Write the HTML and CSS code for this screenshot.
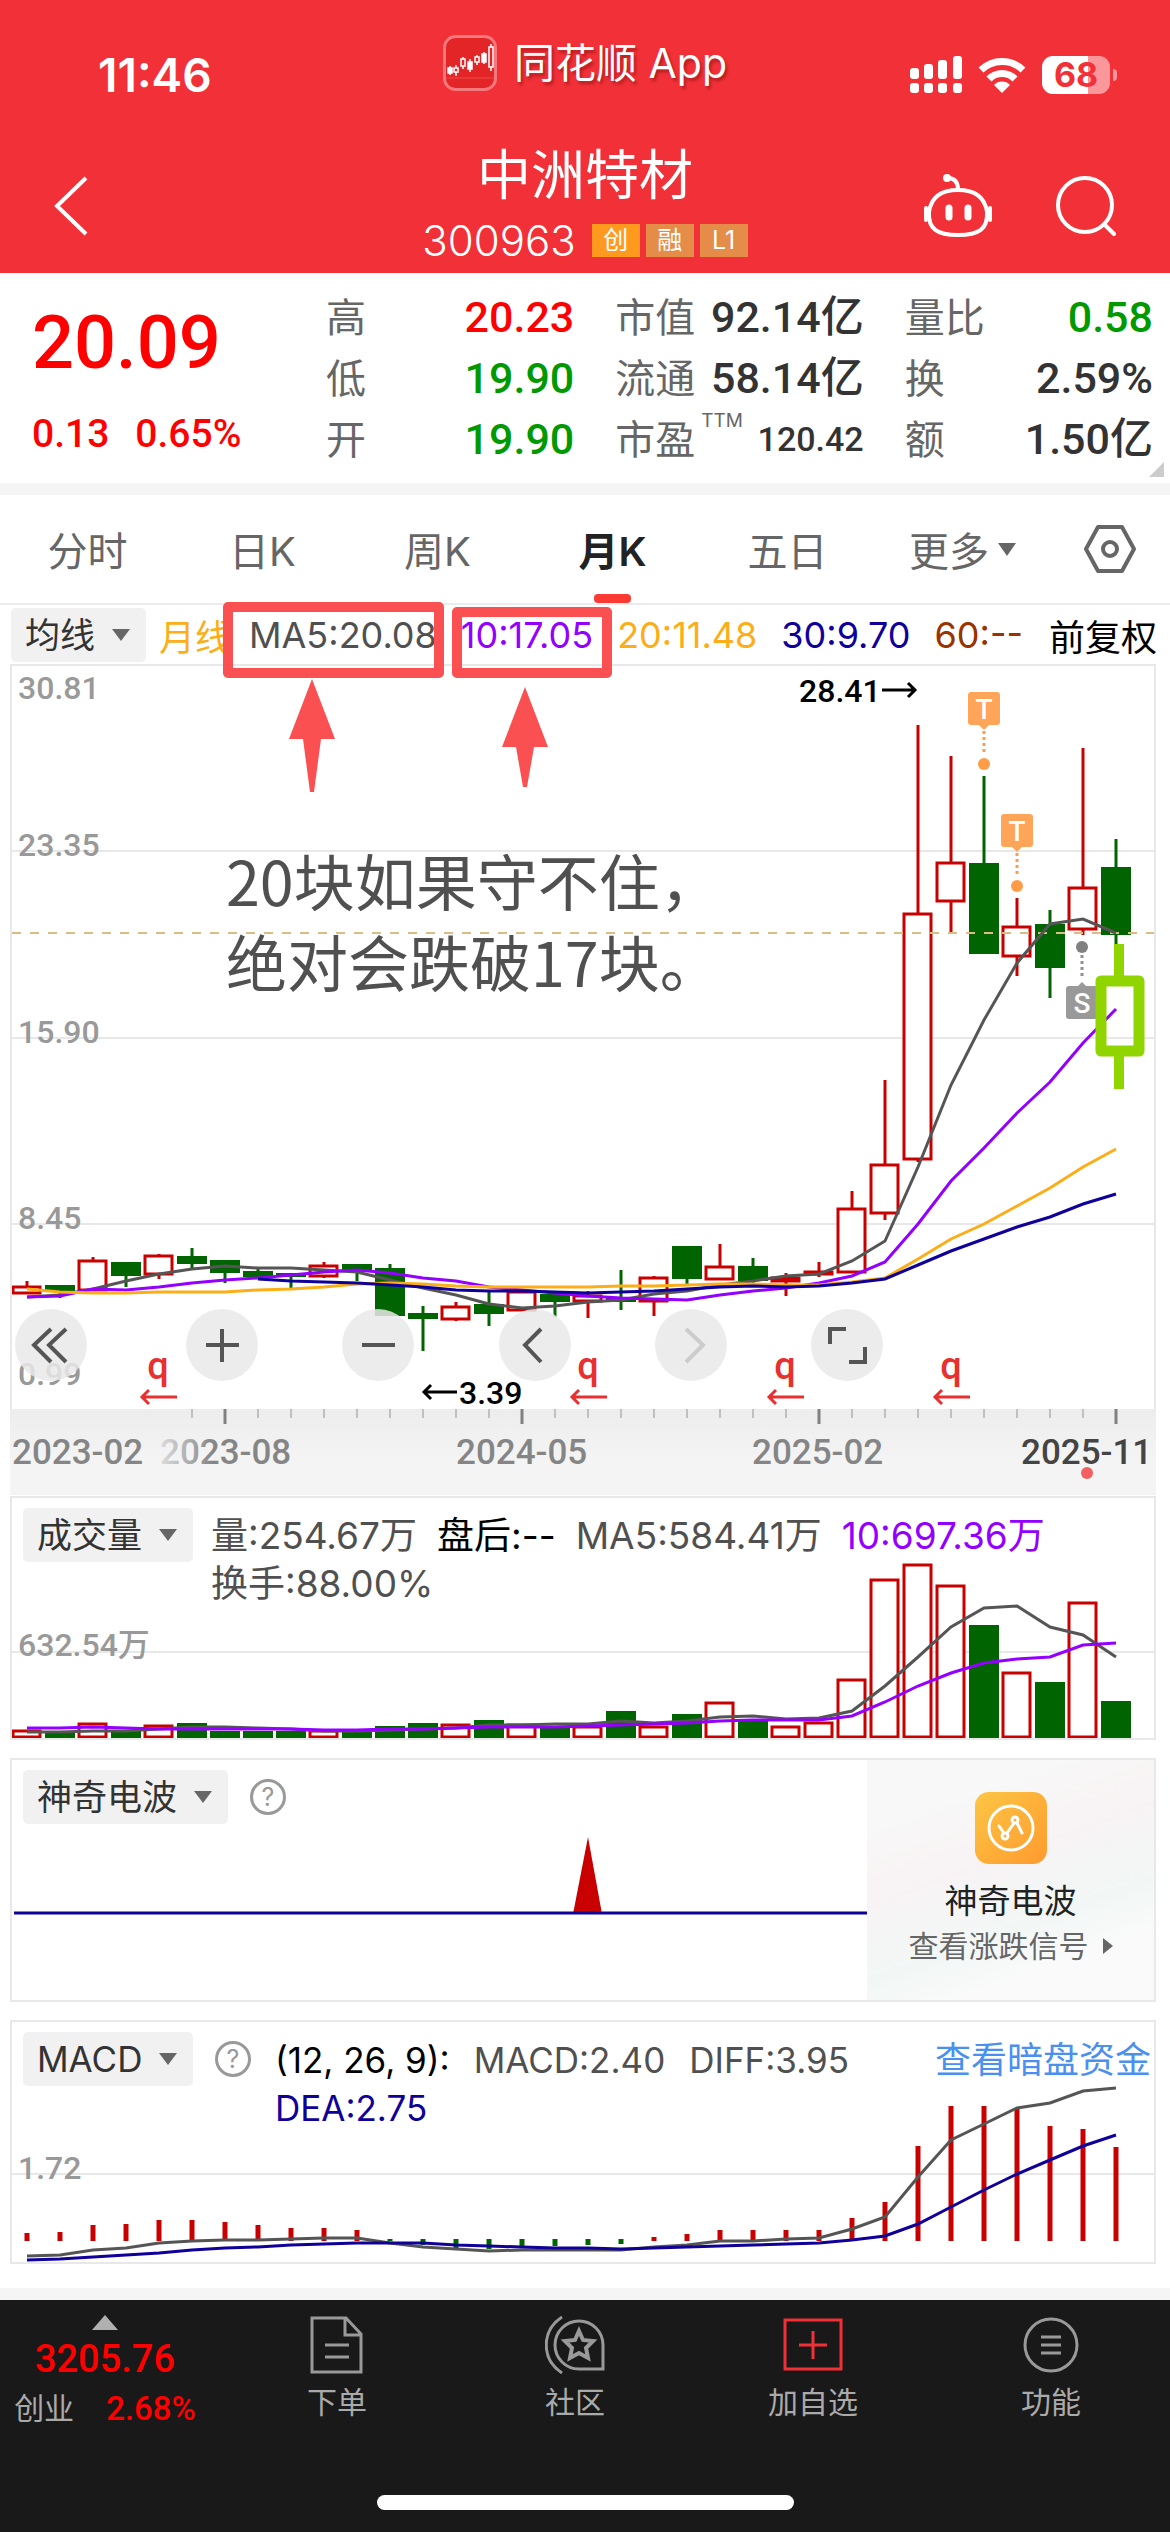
FILE: index.html
```html
<!DOCTYPE html>
<html lang="zh-CN">
<head>
<meta charset="utf-8">
<meta name="viewport" content="width=device-width, initial-scale=1">
<title>中洲特材 300963</title>
<link rel="stylesheet" href="styles.css">
</head>
<body>
<header class="top">
  <div class="status">
    <span class="clock">11:46</span>
    <span class="brand">
      <svg class="brand-logo" viewBox="0 0 54 56" aria-hidden="true">
        <rect x="1.5" y="1.5" width="51" height="53" rx="11" fill="#e32528" stroke="#f5787c" stroke-width="3"/>
        <path d="M3 43h48" stroke="#f0484b"/>
        <g stroke="#fff" stroke-width="1.5" fill="#fff">
          <path d="M7 31v9M13 30v11M20 22v12M27 24v13M34 20v10M41 17v12M48 9v27"/>
          <path d="M5 33h4v5H5zM25 27h4v7h-4zM39 19h4v8h-4z"/>
          <path d="M11 33h4v4h-4zM18 24h4v7h-4zM32 22h4v5h-4zM46 12h4v20h-4z" fill="#e32528"/>
        </g>
      </svg>
      <span>同花顺 App</span>
    </span>
    <span class="signals">
      <svg width="52" height="38" viewBox="0 0 52 38" fill="#fff" aria-hidden="true">
        <rect x="0" y="12" width="9" height="11" rx="3"/><rect x="14" y="8" width="9" height="15" rx="3"/><rect x="28" y="4" width="9" height="19" rx="3"/><rect x="43" y="0" width="9" height="23" rx="3"/>
        <rect x="0" y="27" width="9" height="10" rx="3"/><rect x="14" y="27" width="9" height="10" rx="3"/><rect x="28" y="27" width="9" height="10" rx="3"/><rect x="43" y="27" width="9" height="10" rx="3"/>
      </svg>
      <svg width="48" height="36" viewBox="0 0 48 36" aria-hidden="true">
        <path d="M3 13a30 30 0 0 1 42 0" fill="none" stroke="#fff" stroke-width="7"/>
        <path d="M11 22a18 18 0 0 1 26 0" fill="none" stroke="#fff" stroke-width="7"/>
        <path d="M16 28a11 11 0 0 1 16 0l-8 8z" fill="#fff"/>
      </svg>
      <span class="battery">68</span>
    </span>
  </div>
  <nav class="nav">
    <button class="icon-btn" aria-label="返回">
      <svg width="36" height="60" viewBox="0 0 36 60" fill="none" stroke="#fff" stroke-width="4"><path d="M33 2 4 30l29 28"/></svg>
    </button>
    <div class="stock">
      <h1>中洲特材</h1>
      <p class="code"><span>300963</span><b class="tag tag-hot">创</b><b class="tag">融</b><b class="tag">L1</b></p>
    </div>
    <div class="nav-right">
      <button class="icon-btn" aria-label="智能助手">
        <svg width="70" height="64" viewBox="0 0 70 64" fill="none" stroke="#fff" stroke-width="4" stroke-linecap="round">
          <path d="M35 16C35 8 32 4 25 4"/><circle cx="24" cy="4" r="2" fill="#fff"/>
          <path d="M35 16c18 0 27 8 29 22 1 17-8 23-29 23S5 55 6 38c2-14 11-22 29-22z"/>
          <path d="M3 34v12M67 34v12"/><path d="M26 34v9M45 34v9" stroke-width="7"/>
        </svg>
      </button>
      <button class="icon-btn" aria-label="搜索">
        <svg width="62" height="62" viewBox="0 0 62 62" fill="none" stroke="#fff" stroke-width="4" stroke-linecap="round"><circle cx="30" cy="30" r="27"/><path d="m49 49 10 10"/></svg>
      </button>
    </div>
  </nav>
</header>

<main>
  <section class="quote">
    <div class="price">
      <strong>20.09</strong>
      <p><span>0.13</span><span>0.65%</span></p>
    </div>
    <dl class="stats">
      <div><dt>高</dt><dd class="up">20.23</dd></div>
      <div><dt>低</dt><dd class="down">19.90</dd></div>
      <div><dt>开</dt><dd class="down">19.90</dd></div>
    </dl>
    <dl class="stats">
      <div><dt>市值</dt><dd>92.14亿</dd></div>
      <div><dt>流通</dt><dd>58.14亿</dd></div>
      <div><dt>市盈<sup>TTM</sup></dt><dd class="small">120.42</dd></div>
    </dl>
    <dl class="stats">
      <div><dt>量比</dt><dd class="down">0.58</dd></div>
      <div><dt>换</dt><dd>2.59%</dd></div>
      <div><dt>额</dt><dd>1.50亿</dd></div>
    </dl>
  </section>

  <div class="tabs" role="tablist">
    <button role="tab">分时</button>
    <button role="tab">日K</button>
    <button role="tab">周K</button>
    <button role="tab" aria-selected="true" class="active">月K</button>
    <button role="tab">五日</button>
    <button class="more">更多</button>
    <button aria-label="设置">
      <svg width="52" height="48" viewBox="0 0 52 48" fill="none" stroke="#666" stroke-width="4" stroke-linejoin="round"><path d="M14 2h24l12 22-12 22H14L2 24z"/><circle cx="26" cy="24" r="7"/></svg>
    </button>
  </div>

  <section class="kline">
    <div class="ma-bar">
      <label class="pick"><select aria-label="主图指标"><option>均线</option></select></label>
      <span class="amber period">月线</span>
      <span class="slate">MA5:20.08</span>
      <span class="violet">10:17.05</span>
      <span class="amber">20:11.48</span>
      <span class="navy">30:9.70</span>
      <span class="rust">60:--</span>
      <span class="adjust">前复权</span>
    </div>
    <div class="plot-frame">
      <svg id="kline" class="plot" viewBox="12 666 1142 743" role="img" aria-label="月K线图"></svg>
      <div class="tools">
        <button aria-label="最早"><svg viewBox="0 0 72 72"><path d="M36 20 19 36l17 17M51 20 34 36l17 17"/></svg></button>
        <button aria-label="放大"><svg viewBox="0 0 72 72"><path d="M36 20v33M20 36h33"/></svg></button>
        <button aria-label="缩小"><svg viewBox="0 0 72 72"><path d="M20 36h33"/></svg></button>
        <button aria-label="向左"><svg viewBox="0 0 72 72"><path d="M42 20 26 36l16 17"/></svg></button>
        <button aria-label="向右" disabled><svg viewBox="0 0 72 72"><path d="m31 20 17 16-17 17"/></svg></button>
        <button aria-label="全屏"><svg viewBox="0 0 72 72"><path d="M19 35V20h16M54 38v15H38"/></svg></button>
      </div>
    </div>
    <div class="axis-frame"><svg id="axis" class="plot" viewBox="12 1409 1142 86" role="img" aria-label="日期轴"></svg></div>
    <svg class="notes" viewBox="0 605 1170 890" aria-label="批注">
      <g fill="none" stroke="#fb5052" stroke-width="10" stroke-linejoin="round">
        <rect x="228" y="607" width="211" height="66"/><rect x="457" y="612" width="150" height="61"/>
      </g>
      <g fill="#fb5052">
        <path d="M312 679l23 60h-14l-7 53h-4l-7-53h-14z"/>
        <path d="M525 687l23 60h-14l-7 40h-4l-7-40h-14z"/>
      </g>
      <g fill="none" stroke="#90d400" stroke-width="11" stroke-linejoin="round">
        <rect x="1101" y="981" width="38" height="70"/><path d="M1119 944v32M1119 1056v33" stroke-width="10"/>
      </g>
      <text class="note-text" x="226" y="906">20块如果守不住，</text>
      <text class="note-text" x="226" y="987">绝对会跌破17块。</text>
    </svg>
  </section>

  <section class="panel">
    <svg id="volume" class="plot" viewBox="12 1498 1142 240" role="img" aria-label="成交量"></svg>
    <div class="panel-head">
      <label class="pick"><select aria-label="副图指标一"><option>成交量</option></select></label>
      <div class="readout volume-readout">
        <p><span class="slate">量:254.67万</span><span class="black">盘后:--</span><span class="slate">MA5:584.41万</span><span class="violet">10:697.36万</span></p>
        <p><span class="slate">换手:88.00%</span></p>
      </div>
    </div>
  </section>

  <section class="panel">
    <svg id="wave" class="plot" viewBox="12 1760 1142 240" role="img" aria-label="神奇电波">
      <path d="M573 1914 588 1837l14 77z" fill="#c80000"/>
      <path d="M14 1913H867" stroke="#10009a" stroke-width="3"/>
    </svg>
    <div class="panel-head">
      <label class="pick"><select aria-label="副图指标二"><option>神奇电波</option></select></label>
      <button class="help" aria-label="说明">?</button>
    </div>
    <a class="promo" href="#wave">
      <svg width="72" height="72" viewBox="0 0 72 72" fill="none" stroke="#fff" stroke-width="3" stroke-linecap="round" stroke-linejoin="round" aria-hidden="true">
        <defs><linearGradient id="gold" x1="0" y1="0" x2="1" y2="1"><stop offset="0" stop-color="#fcc644"/><stop offset="1" stop-color="#ff9a2e"/></linearGradient></defs>
        <rect width="72" height="72" rx="14" fill="url(#gold)" stroke="none"/>
        <circle cx="36" cy="36" r="22"/>
        <path d="m24 34 5 7M32 41l7-10M42 31l5 10"/><circle cx="30" cy="44" r="3"/><circle cx="40" cy="28" r="3"/>
      </svg>
      <span class="promo-name">神奇电波</span>
      <span class="promo-more">查看涨跌信号</span>
    </a>
  </section>

  <section class="panel">
    <svg id="macd" class="plot" viewBox="12 2022 1142 240" role="img" aria-label="MACD"></svg>
    <div class="panel-head">
      <label class="pick"><select aria-label="副图指标三"><option>MACD</option></select></label>
      <button class="help" aria-label="说明">?</button>
      <div class="readout macd-readout">
        <p><span class="black">(12, 26, 9):</span><span class="slate">MACD:2.40</span><span class="slate">DIFF:3.95</span></p>
        <p><span class="navy">DEA:2.75</span></p>
      </div>
      <a class="dark-pool" href="#macd">查看暗盘资金</a>
    </div>
  </section>
</main>

<footer class="dock">
  <div class="dock-row">
    <a class="index" href="#kline"><strong>3205.76</strong><span><i>创业</i><b>2.68%</b></span></a>
    <a href="#order"><svg width="60" height="60" viewBox="0 0 60 60"><path d="M5 3h34l15 16v38H5zM38 4v16h15M18 30h24M18 42h24"/></svg>下单</a>
    <a href="#community"><svg width="60" height="60" viewBox="0 0 60 60"><path d="M17 2C-4 16-4 44 17 58M34 54h24V30A24 24 0 1 0 34 54z"/><path d="m34 16 4 9 10 1-7 7 2 10-9-5-9 5 2-10-7-7 10-1z" stroke-width="4"/></svg>社区</a>
    <a href="#add"><svg class="add" width="60" height="60" viewBox="0 0 60 60"><path d="M2 5h56v49H2zM30 16v28M16 30h28"/></svg>加自选</a>
    <a href="#menu"><svg width="60" height="60" viewBox="0 0 60 60"><circle cx="30" cy="30" r="26"/><path d="M20 22h20M20 30h20M20 38h20"/></svg>功能</a>
  </div>
  <div class="home-bar"></div>
</footer>
<script src="charts.js"></script>
</body>
</html>
```
FILE: styles.css
```css
* { box-sizing: border-box; }
body, h1, p, dl, dd { margin: 0; }
body {
  background: #fff;
  color: #333;
  font-family: Inter, "Noto Sans CJK SC", sans-serif;
  font-size: 36px;
}
button, select { font: inherit; color: inherit; border: 0; background: none; padding: 0; margin: 0; }
a { color: inherit; text-decoration: none; }
i { font-style: normal; }
svg { display: block; }

/* header */
.top { background: #f23037; color: #fff; }
.status { display: grid; grid-template-columns: 1fr auto 1fr; align-items: center; height: 130px; padding: 20px 60px 0; }
.clock { margin-left: 38px; font-size: 46px; font-weight: 600; }
.brand { display: flex; align-items: center; gap: 17px; margin-bottom: 24px; font-size: 41px; text-shadow: 2px 3px 3px rgba(90, 0, 0, .4); line-height: 56px; }
.brand-logo { width: 54px; height: 56px; }
.signals { display: flex; justify-content: flex-end; align-items: center; gap: 16px; }
.battery { position: relative; width: 68px; height: 38px; border-radius: 11px; background: linear-gradient(90deg, #fff 68%, #f9979b 68%); color: #f23037; font-size: 34px; font-weight: 700; line-height: 38px; text-align: center; }
.battery::after { content: ""; position: absolute; right: -7px; top: 13px; width: 4px; height: 12px; border-radius: 0 4px 4px 0; background: #f9979b; }
.nav { display: grid; grid-template-columns: 1fr auto 1fr; height: 143px; padding: 8px 53px 0; align-items: center; }
.icon-btn { display: block; }
.stock { text-align: center; }
.stock h1 { font-size: 54px; font-weight: 400; line-height: 70px; }
.code { display: flex; align-items: center; justify-content: center; gap: 6px; font-size: 42px; font-weight: 300; line-height: 60px; }
.code span { margin-right: 10px; }
.tag { width: 48px; height: 33px; background: #e58c48; font-size: 25px; font-weight: 400; line-height: 33px; }
.tag-hot { background: #ff9a1f; }
.nav-right { display: flex; justify-content: flex-end; align-items: center; gap: 62px; }

/* quote */
.quote { position: relative; display: grid; grid-template-columns: 253px repeat(3, 1fr); column-gap: 41px; padding: 14px 17px 10px 32px; height: 222px; border-bottom: 12px solid #f5f5f5; }
.quote::after { content: ""; position: absolute; right: 6px; bottom: 6px; border: solid transparent; border-width: 0 0 15px 15px; border-bottom-color: #ccc; }
.price, .stats dd, .index { font-family: Roboto, "Noto Sans CJK SC", sans-serif; font-weight: 500; }
.price { color: #f00; }
.price strong { display: block; font-size: 74px; font-weight: 500; line-height: 112px; }
.price p { display: flex; gap: 26px; font-size: 39px; line-height: 70px; }
.stats div { display: flex; justify-content: space-between; align-items: center; height: 61px; line-height: 61px; }
.stats dt { position: relative; font-size: 40px; color: #666; }
.stats dd { font-size: 43px; white-space: nowrap; }
.stats dd.small { font-size: 34px; }
.stats sup { position: absolute; left: 86px; top: -8px; font-size: 19px; line-height: 40px; }
.stats .up { color: #f00; }
.stats .down { color: #090; }

/* period tabs */
.tabs { display: grid; grid-template-columns: repeat(6, 175fr) 120fr; height: 110px; border-bottom: 2px solid #ececec; font-size: 40px; color: #666; }
.tabs button { position: relative; display: flex; align-items: center; justify-content: center; }
.tabs .active { color: #222; font-weight: 600; }
.tabs .active::after { content: ""; position: absolute; bottom: 0; width: 37px; height: 9px; border-radius: 4px; background: #fb3a34; }
.tabs .more { gap: 9px; }
.more::after { content: ""; border: solid transparent; border-width: 13px 9px 0; border-top-color: #666; }

/* shared chart pieces */
.plot { width: 100%; height: auto; }
.plot text { font-family: Roboto, "Noto Sans CJK SC", sans-serif; font-size: 32px; font-weight: 500; }
.plot .date { font-size: 35px; }
.plot .event { font-size: 38px; }
.plot .pin { font-size: 28px; }
.pick { display: grid; align-items: center; height: 54px; border-radius: 5px; background: #f1f1f1; color: #333; }
.pick select { grid-area: 1 / 1; appearance: none; padding: 0 50px 0 14px; height: 54px; font-size: 35px; }
.pick::after { content: ""; grid-area: 1 / 1; justify-self: end; margin-right: 16px; border: solid transparent; border-width: 12px 9px 0; border-top-color: #666; pointer-events: none; }
.slate { color: #505050; }
.violet { color: #9400ff; }
.amber { color: #fbae17; }
.navy { color: #10009a; }
.rust { color: #993300; }
.black { color: #000; }

/* main chart */
.kline { position: relative; }
.ma-bar { display: flex; align-items: center; height: 59px; padding: 0 13px 0 11px; gap: 24px; font-size: 36px; white-space: nowrap; }
.period { margin: 0 -6px 0 -11px; }
.adjust { margin-left: auto; color: #000; }
.plot-frame { position: relative; margin: 0 14px 0 10px; border: solid #e8e8e8; border-width: 2px 2px 0; }
.axis-frame { margin: 0 14px 0 10px; padding: 0 2px; background: linear-gradient(#ededed, #f4f4f4 60%); }
.tools { position: absolute; left: 3px; bottom: 28px; width: 868px; max-width: 100%; display: flex; justify-content: space-between; }
.tools button { width: 72px; height: 72px; border-radius: 50%; background: rgba(233, 233, 233, .85); }
.tools button:first-child { margin-right: 15px; }
.tools path { fill: none; stroke: #555; stroke-width: 4; }
.tools button:disabled path { stroke: #ccc; }
.notes { position: absolute; left: 0; top: 0; width: 100%; height: auto; overflow: visible; pointer-events: none; }
.note-text { font-family: "Noto Sans CJK SC", sans-serif; font-size: 61px; fill: #505050; }

/* indicator panels */
.panel { display: grid; margin: 18px 14px 0 10px; border: 2px solid #e8e8e8; }
.kline + .panel { margin-top: 1px; }
.panel > * { grid-area: 1 / 1; }
.panel-head { display: flex; align-self: start; align-items: flex-start; padding: 10px 3px 0 11px; white-space: nowrap; }
.readout { padding-top: 4px; line-height: 48px; }
.readout p { display: flex; }
.volume-readout { margin-left: 18px; font-size: 37px; }
.volume-readout p { gap: 20px; }
.macd-readout { margin-left: 24px; font-size: 35px; }
.macd-readout p { gap: 24px; }
.help { width: 36px; height: 36px; margin: 9px 0 0 22px; border: 3px solid #999; border-radius: 50%; color: #999; font-size: 25px; line-height: 30px; }
.dark-pool { margin-left: auto; padding-top: 4px; line-height: 48px; color: #4a90f0; }
.promo { justify-self: end; width: 287px; padding-top: 32px; display: flex; flex-direction: column; align-items: center; background: linear-gradient(160deg, #f8f8f8 20%, #f8f3f4 40%, #f2f7f6 65%, #fafafa 80%); }
.promo-name { margin-top: 14px; font-size: 33px; line-height: 46px; color: #222; }
.promo-more { display: flex; align-items: center; gap: 14px; font-size: 30px; line-height: 44px; color: #666; }
.promo-more::after { content: ""; border: solid transparent; border-width: 8px 0 8px 10px; border-left-color: #666; }

/* bottom dock */
.dock { margin-top: 24px; padding-bottom: 22px; border-top: 12px solid #f5f5f5; background: #191919; }
.dock-row { display: grid; grid-template-columns: 218fr repeat(4, 238fr); height: 195px; padding-top: 15px; color: #aaa; font-size: 30px; line-height: 42px; }
.dock-row a { display: flex; flex-direction: column; align-items: center; gap: 6px; }
.dock-row svg { fill: none; stroke: #999; stroke-width: 3; }
.dock-row .add { stroke: #f23037; }
.dock-row .index { gap: 0; padding-right: 8px; color: #f00; }
.index::before { content: ""; border: solid transparent; border-width: 0 13px 15px; border-bottom-color: #b0b0b0; }
.index strong { font-size: 38px; font-weight: 500; line-height: 58px; }
.index span { display: flex; align-items: center; gap: 32px; }
.index i { color: #aaa; font-weight: 400; }
.index b { font-size: 33px; font-weight: 500; }
.home-bar { width: 417px; height: 15px; margin: 0 auto; border-radius: 8px; background: #fff; }
```
FILE: charts.js
```js
const RED = '#c80000', GREEN = '#006400', GRAY = '#555', PURPLE = '#9400ff', AMBER = '#fbae17', NAVY = '#10009a';
const STEP = 33, FIRST = 27, LEFT = 12, RIGHT = 1154;
const cx = i => FIRST + STEP * i;

const line = (x1, y1, x2, y2, color, width, extra = '') =>
  `<path d="M${x1} ${y1}L${x2} ${y2}" stroke="${color}" stroke-width="${width}" ${extra}/>`;
const grid = y => line(LEFT, y, RIGHT, y, '#e8e8e8', 2);
const curve = (values, color, start = 0) =>
  `<polyline fill="none" stroke="${color}" stroke-width="3" points="${values.map((y, i) => cx(i + start) + ',' + y).join(' ')}"/>`;
const label = (x, y, text, color = '#999', extra = '') => `<text x="${x}" y="${y}" fill="${color}" ${extra}>${text}</text>`;
const box = (i, top, bottom, up) => up
  ? `<rect x="${cx(i) - 14}" y="${top + 1}" width="27" height="${Math.max(bottom - top - 2, 2)}" fill="#fff" stroke="${RED}" stroke-width="3"/>`
  : `<rect x="${cx(i) - 15}" y="${top}" width="30" height="${bottom - top}" fill="${GREEN}"/>`;

/* [up, high, body top, body bottom, low] */
const candles = [
  [1,1281,1286,1294,1294],[0,1285,1285,1291,1298],[1,1257,1260,1291,1291],[0,1262,1262,1276,1287],[1,1254,1255,1275,1279],
  [0,1248,1256,1264,1268],[0,1260,1260,1273,1283],[0,1267,1271,1277,1277],[0,1273,1273,1277,1288],[1,1262,1265,1277,1278],
  [0,1264,1264,1271,1281],[0,1264,1268,1316,1316],[0,1306,1313,1319,1351],[1,1302,1306,1320,1321],[0,1291,1304,1314,1326],
  [1,1291,1291,1311,1311],[0,1294,1294,1302,1317],[1,1291,1295,1302,1318],[0,1270,1298,1302,1310],[1,1276,1277,1302,1316],
  [0,1246,1246,1279,1284],[1,1244,1266,1280,1280],[0,1258,1266,1281,1283],[1,1273,1277,1282,1296],[1,1262,1271,1274,1277],
  [1,1191,1208,1273,1273],[1,1080,1164,1214,1220],[1,725,913,1160,1162],[1,756,862,902,932],[0,776,863,954,954],
  [1,898,926,957,976],[0,910,924,968,998],[1,748,887,930,935],[0,839,867,935,946]
];
const ma5 = [1297,1295,1289,1281,1274,1269,1266,1268,1268,1270,1272,1280,1288,1295,1304,1308,1306,1302,1300,1294,1291,1285,1281,1276,1274,1261,1241,1167,1085,1020,963,924,919,933];
const ma10 = [1297,1296,1289,1290,1287,1283,1280,1278,1275,1272,1270,1273,1278,1281,1287,1290,1293,1296,1298,1299,1300,1295,1291,1288,1283,1276,1262,1224,1181,1148,1113,1082,1043,1009];
const ma20 = [1289,1292,1293,1293,1292,1292,1292,1290,1289,1287,1284,1283,1284,1286,1287,1287,1287,1287,1286,1286,1285,1284,1284,1285,1285,1282,1278,1259,1239,1224,1206,1188,1167,1149];
const ma30 = [1279,1281,1282,1283,1285,1287,1290,1291,1291,1292,1293,1292,1291,1289,1287,1286,1287,1286,1283,1279,1265,1251,1239,1227,1217,1204,1194];

const pin = (x, top, dot, letter) =>
  `<rect x="${x - 16}" y="${top}" width="32" height="33" rx="3" fill="#ffa55a"/><path d="M${x - 5} ${top + 33}h10l-5 5z" fill="#ffa55a"/>` +
  line(x, top + 39, x, dot - 10, '#ff9c47', 3, 'stroke-dasharray="3 3"') +
  `<circle cx="${x}" cy="${dot}" r="6" fill="#ff9c47"/>` +
  `<text x="${x}" y="${top + 27}" text-anchor="middle" class="pin" fill="#fff">${letter}</text>`;
const arrow = (tip, y, tail, color) => {
  const d = tail > tip ? 7 : -7;
  return `<path d="M${tail} ${y}H${tip}M${tip + d} ${y - 7}L${tip} ${y}l${d} 7" fill="none" stroke="${color}" stroke-width="3"/>`;
};

document.getElementById('kline').innerHTML =
  [851, 1038, 1224].map(grid).join('') +
  [[699, '30.81'], [856, '23.35'], [1043, '15.90'], [1229, '8.45'], [1385, '0.99']].map(([y, t]) => label(18, y, t)).join('') +
  candles.map(([up, hi, top, bottom, lo], i) => line(cx(i), hi, cx(i), lo, up ? RED : GREEN, 3) + box(i, top, bottom, up)).join('') +
  line(LEFT, 933, RIGHT, 933, '#d9bc86', 2, 'stroke-dasharray="9 9"') +
  curve(ma5, GRAY) + curve(ma10, PURPLE) + curve(ma20, AMBER) + curve(ma30, NAVY, 7) +
  label(799, 702, '28.41', '#000') + arrow(915, 690, 882, '#000') +
  label(459, 1404, '3.39', '#000') + arrow(424, 1392, 457, '#000') +
  [158, 588, 785, 951].map(x => `<text x="${x}" y="1379" text-anchor="middle" class="event" fill="#e83030">q</text>` + arrow(x - 16, 1397, x + 19, '#e83030')).join('') +
  pin(984, 692, 764, 'T') + pin(1017, 814, 886, 'T') +
  `<circle cx="1082" cy="947" r="6" fill="#808080"/>` + line(1082, 955, 1082, 977, '#909090', 3, 'stroke-dasharray="3 3"') +
  `<path d="M1077 987l5-5 5 5z" fill="#999"/><rect x="1066" y="986" width="32" height="33" rx="3" fill="#999"/><text x="1082" y="1013" text-anchor="middle" class="pin" fill="#fff">S</text>`;

document.getElementById('axis').innerHTML =
  '<defs><linearGradient id="fade"><stop offset="0" stop-color="#ddd"/><stop offset=".4" stop-color="#858585"/></linearGradient></defs>' +
  candles.map((_, i) => i < 5 ? '' : i % 9 === 6 ? line(cx(i), 1409, cx(i), 1424, '#808080', 3) : line(cx(i), 1409, cx(i), 1418, '#c0c0c0', 2)).join('') +
  [[12, '2023-02', '#858585'], [160, '2023-08', 'url(#fade)'], [456, '2024-05', '#858585'], [752, '2025-02', '#858585'], [1021, '2025-11', '#444']]
    .map(([x, t, c]) => label(x, 1464, t, c, 'class="date"')).join('') +
  `<circle cx="1087" cy="1473" r="6" fill="#f45f60"/>`;

const volumes = [1730,1733,1723,1731,1725,1723,1731,1731,1731,1730,1731,1726,1723,1724,1720,1724,1728,1726,1711,1726,1714,1702,1721,1726,1722,1679,1579,1564,1585,1625,1672,1682,1602,1701];
const vol5 = [1732,1732,1731,1731,1729,1727,1727,1728,1729,1731,1731,1730,1729,1728,1725,1725,1724,1724,1721,1723,1721,1717,1716,1719,1718,1711,1686,1657,1627,1608,1606,1627,1635,1657];
const vol10 = [1728,1728,1727,1728,1729,1729,1729,1729,1729,1730,1730,1729,1729,1728,1727,1727,1727,1726,1725,1724,1723,1721,1720,1720,1720,1716,1702,1686,1673,1663,1659,1657,1645,1643];
document.getElementById('volume').innerHTML =
  grid(1652) + label(18, 1656, '632.54万') +
  volumes.map((top, i) => box(i, top, 1738, candles[i][0])).join('') + curve(vol5, GRAY) + curve(vol10, PURPLE);

const bars = [2233,2232,2225,2224,2220,2220,2222,2225,2228,2228,2230,2241,2245,2248,2249,2247,2246,2245,2244,2237,2234,2230,2230,2230,2230,2218,2202,2146,2106,2106,2108,2126,2129,2147];
const diff = [2256,2255,2250,2248,2243,2241,2240,2240,2239,2238,2238,2243,2247,2249,2251,2250,2250,2250,2250,2247,2245,2241,2241,2239,2238,2229,2217,2177,2140,2124,2108,2103,2091,2088];
const dea = [2260,2259,2257,2255,2253,2250,2248,2247,2245,2244,2243,2243,2243,2245,2246,2247,2248,2248,2249,2248,2247,2246,2245,2244,2243,2240,2236,2224,2207,2190,2174,2160,2146,2135];
document.getElementById('macd').innerHTML =
  grid(2174) + label(18, 2179, '1.72') +
  bars.map((y, i) => y > 2240 ? line(cx(i), 2239, cx(i), y, GREEN, 5) : line(cx(i), 2241, cx(i), y, RED, 5)).join('') +
  curve(diff, GRAY) + curve(dea, NAVY);
```
